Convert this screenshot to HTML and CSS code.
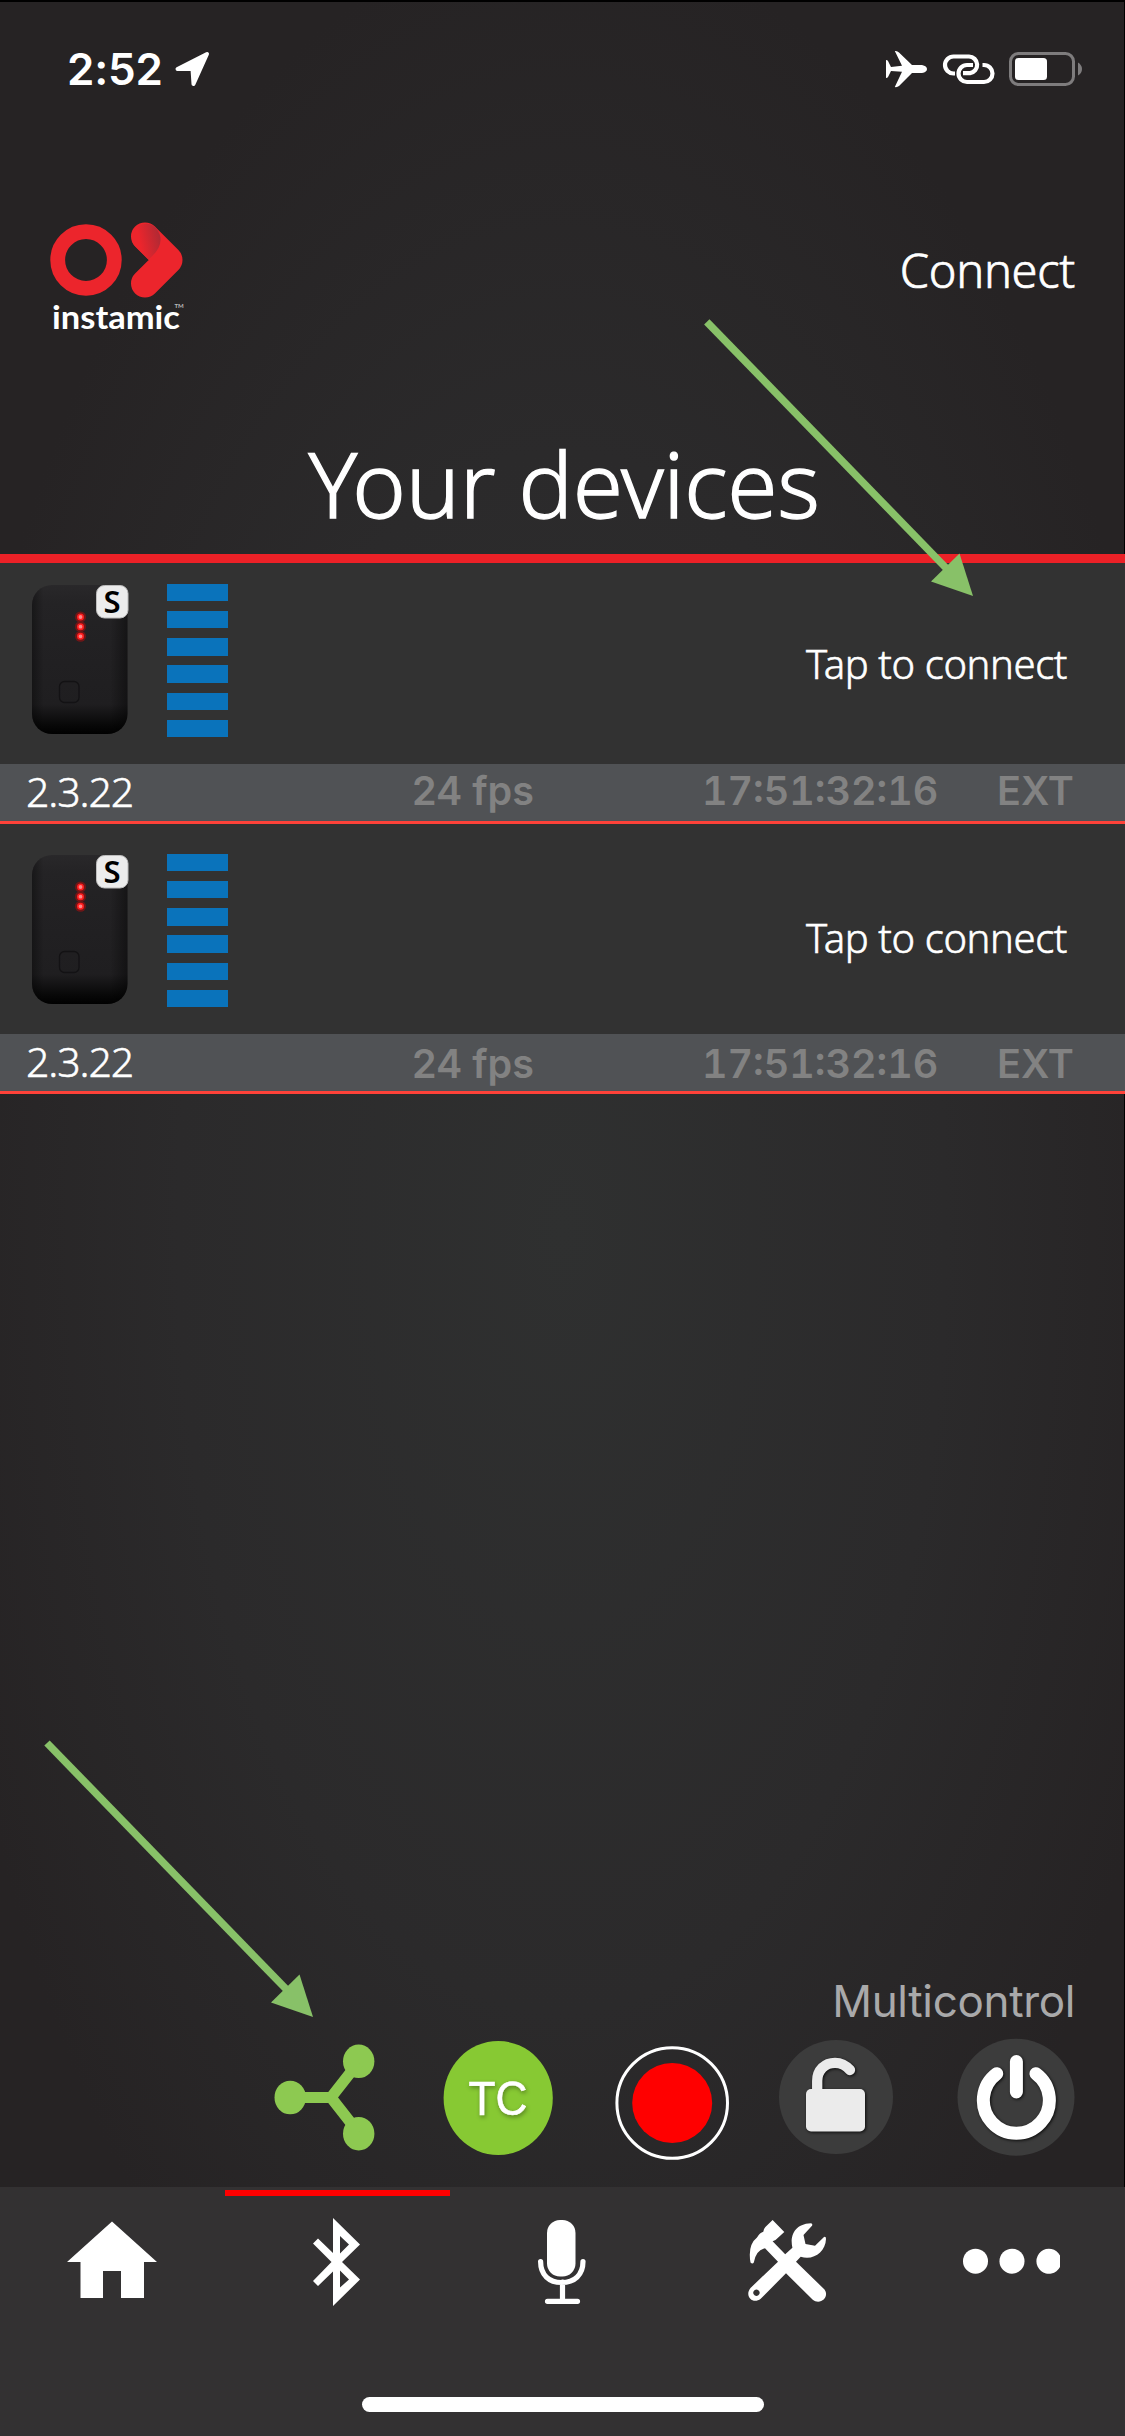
FILE: index.html
```html
<!DOCTYPE html>
<html lang="en">
<head>
<meta charset="utf-8">
<title>Your devices</title>
<link rel="stylesheet" href="styles.css">
</head>
<body>
<svg class="defs" width="0" height="0" aria-hidden="true">
  <defs>
    <linearGradient id="shell" x1="0" y1="0" x2="0" y2="1">
      <stop offset="0" stop-color="#29282a"/><stop offset=".12" stop-color="#242325"/>
      <stop offset=".8" stop-color="#1f1e20"/><stop offset=".94" stop-color="#080808"/><stop offset="1" stop-color="#000"/>
    </linearGradient>
    <linearGradient id="side" x1="0" y1="0" x2="1" y2="0">
      <stop offset="0" stop-color="#000" stop-opacity=".35"/><stop offset=".12" stop-color="#000" stop-opacity="0"/>
      <stop offset=".82" stop-color="#000" stop-opacity="0"/><stop offset="1" stop-color="#000" stop-opacity=".4"/>
    </linearGradient>
    <symbol id="device" viewBox="0 0 98 150">
      <rect x="0" y="0" width="95.5" height="149" rx="20" fill="url(#shell)"/>
      <rect x="0" y="0" width="95.5" height="149" rx="20" fill="url(#side)"/>
      <g fill="#f00" opacity=".35"><circle cx="48.5" cy="32" r="5.5"/><circle cx="48.5" cy="41.7" r="5.5"/><circle cx="48.5" cy="51.3" r="5.5"/></g>
      <g fill="#ff8585" stroke="#ff1d1d" stroke-width="1.6"><circle cx="48.5" cy="32" r="2.7"/><circle cx="48.5" cy="41.7" r="2.7"/><circle cx="48.5" cy="51.3" r="2.7"/></g>
      <rect x="27.500" y="96.500" width="19.500" height="21" rx="5" fill="none" stroke="#131214" stroke-width="1.3"/>
      <rect x="64.500" y="0.500" width="31.500" height="32.500" rx="8" fill="#ececec" stroke="#bdbdbd"/>
      <text class="badge-letter" x="80" y="28" text-anchor="middle">S</text>
    </symbol>
  </defs>
</svg>
<div class="screen">
  <header class="status">
    <span class="time">2:52</span>
    <svg class="location" width="36" height="36" viewBox="174 52 36 36"><path d="M207 55L193.500 85L192.500 70H177.500Z" fill="#fff" stroke="#fff" stroke-width="4" stroke-linejoin="round"/></svg>
    <svg class="plane" width="42" height="38" viewBox="885 50 42 38"><path fill="#fff" d="M894.800 51Q897.200 50.500 899 52.500L912 65H922Q927 66 927 69T922 73H912L899 86Q897.200 87.500 894.800 87L902 71.800L891 71L888 77Q887.500 78 886 78V60Q887.500 60 888 61L891 67L902 65.800Z"/></svg>
    <svg class="link" width="53" height="32" viewBox="942 53 53 32"><g fill="none" stroke="#fff" stroke-width="4.200"><path d="M955 73.500H953.500A8.500 8.500 0 0 1 953.500 56.500H969A8.400 8.400 0 0 1 970 73.200H963"/><path d="M973 65H967A8.500 8.500 0 0 0 967 82H984A8.500 8.500 0 0 0 984 65H982.500"/></g></svg>
    <svg class="battery" width="75" height="36" viewBox="1008 51 75 36"><rect x="1010.500" y="53.500" width="63" height="31" rx="8" fill="none" stroke="#7e7c7d" stroke-width="3"/><rect x="1015" y="58" width="32" height="22" rx="3.500" fill="#fff"/><path d="M1078 62.500Q1082 65 1082 69T1078 75.500Z" fill="#7e7c7d"/></svg>
  </header>

  <div class="brand">
    <svg class="logo" width="136" height="120" viewBox="49 222 136 120">
      <defs><linearGradient id="fold" gradientUnits="userSpaceOnUse" x1="140" y1="243" x2="163" y2="238"><stop offset="0" stop-color="#ec252c"/><stop offset="1" stop-color="#a92a35"/></linearGradient></defs>
      <circle cx="86" cy="260" r="28.300" fill="none" stroke="#ec252c" stroke-width="14.800"/>
      <path d="M145 236.500L168.500 260L145 283.500" fill="none" stroke="#ec252c" stroke-width="28" stroke-linecap="round" stroke-linejoin="round"/>
      <path d="M148.500 259.500L134 245A14 14 0 0 1 156 228Q168 243 148.500 259.500Z" fill="url(#fold)"/>
      <text class="wordmark" x="52" y="328.500" textLength="128" lengthAdjust="spacingAndGlyphs">instamic</text>
      <text class="tm" x="174.500" y="308">TM</text>
    </svg>
    <span class="connect">Connect</span>
  </div>

  <h1 class="title"><span>Your devices</span></h1>

  <ul class="devices">
    <li class="device">
      <div class="device-body">
        <svg class="unit" width="98" height="150"><use href="#device"/></svg>
        <div class="signal"><i></i><i></i><i></i><i></i><i></i><i></i></div>
        <span class="tap">Tap to connect</span>
      </div>
      <div class="info"><span class="version">2.3.22</span><span class="fps">24 fps</span><span class="tc">17:51:32:16</span><span class="ext">EXT</span></div>
    </li>
    <li class="device second">
      <div class="device-body">
        <svg class="unit" width="98" height="150"><use href="#device"/></svg>
        <div class="signal"><i></i><i></i><i></i><i></i><i></i><i></i></div>
        <span class="tap">Tap to connect</span>
      </div>
      <div class="info"><span class="version">2.3.22</span><span class="fps">24 fps</span><span class="tc">17:51:32:16</span><span class="ext">EXT</span></div>
    </li>
  </ul>

  <section class="multi">
    <div class="multi-label"><span>Multicontrol</span></div>
    <div class="controls">
      <svg class="share" width="102" height="118" viewBox="274 2038 102 118"><g fill="#8dc951"><ellipse cx="290.200" cy="2097.500" rx="15.700" ry="16.800"/><ellipse cx="358.700" cy="2061.300" rx="15.700" ry="16.800"/><ellipse cx="358.700" cy="2133.700" rx="15.700" ry="16.800"/></g><path d="M290 2097.500H331L358 2063M331 2097.500L358 2132" fill="none" stroke="#8dc951" stroke-width="11"/></svg>
      <svg class="tc-btn" width="110" height="118" viewBox="443 2038 110 118"><ellipse cx="498.200" cy="2098" rx="54.600" ry="57" fill="#87c933"/><text class="tc-text" x="498" y="2115.300" text-anchor="middle" textLength="59" lengthAdjust="spacingAndGlyphs">TC</text></svg>
      <svg class="rec" width="115" height="124" viewBox="615 2038 115 124"><circle cx="672.200" cy="2103" r="55.300" fill="none" stroke="#fff" stroke-width="3"/><circle cx="672.200" cy="2103" r="40" fill="#f00"/></svg>
      <svg class="lock" width="115" height="118" viewBox="779 2038 115 118"><circle cx="836" cy="2097" r="57" fill="#3c3c3c"/><g class="raised"><rect x="806" y="2089" width="59" height="42.500" rx="5" fill="#ebebeb"/><path d="M817.200 2092V2081C817.200 2070 825 2062.800 835 2062.800C842 2062.800 846 2065.500 850 2070" fill="none" stroke="#ebebeb" stroke-width="10.300" stroke-linecap="round"/></g></svg>
      <svg class="power" width="118" height="118" viewBox="957 2038 118 118"><circle cx="1016" cy="2097.300" r="58.500" fill="#3c3c3c"/><path class="raised" d="M996.700 2073.700A33 33 0 1 0 1036 2073.700M1016.400 2061.500V2092" fill="none" stroke="#fff" stroke-width="13" stroke-linecap="round"/></svg>
    </div>
  </section>

  <nav class="tabs">
    <svg class="tab" viewBox="0 2187 225 140"><path fill="#fff" d="M112 2221.500L157 2262H144V2298H121V2271H103V2298H80.500V2262H67Z"/></svg>
    <div class="tab active"><svg viewBox="225 2187 225 140"><path fill="#fff" fill-rule="evenodd" d="M333 2218L360 2244.500L342 2262L360 2279.500L333 2306V2271.500L318 2286L313 2281L331.500 2262L313 2243.500L318 2238.500L333 2253ZM340 2236V2253.500L349 2244.500ZM340 2270.500V2287.500L349 2279.500Z"/></svg></div>
    <svg class="tab" viewBox="450 2187 225 140"><rect x="547" y="2220" width="28.500" height="56.500" rx="13" fill="#fff"/><path d="M540.600 2261.500C540.600 2275 549 2282.500 561.700 2282.500S583 2275 583 2261.500M562.500 2282V2300M547.500 2301.300H577.500" fill="none" stroke="#fff" stroke-width="5.200" stroke-linecap="round"/></svg>
    <svg class="tab" viewBox="675 2187 225 140"><path fill="#fff" fill-rule="evenodd" d="M772.600 2220L784.300 2232L775.500 2240L772.600 2241.300L785.200 2254.300L792.400 2247.700C790 2238 793 2224 811 2223.300Q813 2224 812 2225.700L803.500 2235L805.500 2244L815 2245.700L824 2237Q826 2236 826 2239C825.500 2252 813 2261 800.700 2256.700L796 2261.700L824.500 2289.500C830 2297 820 2306 812.500 2299.500L786 2273.300L760.700 2298.800C753 2305 744 2296 750.500 2288L778 2261.700L765 2248.300Q756 2250 753.800 2262.500Q752.500 2264.500 750.500 2262.500Q747.500 2245 757 2237.500Q760 2232.500 763.300 2231.700Q763.500 2229 765.400 2227ZM756.400 2289.500A3.200 3.200 0 1 0 756.500 2289.500Z"/></svg>
    <svg class="tab" viewBox="900 2187 225 140"><g fill="#fff"><ellipse cx="975.500" cy="2261.200" rx="12.500" ry="12.500"/><circle cx="1012" cy="2261.200" r="12.500"/><path d="M1060 2255.500V2267A12.500 12.500 0 1 1 1060 2255.500Z"/></g></svg>
    <div class="home-indicator"></div>
  </nav>

  <svg class="pointers" width="1125" height="2436" viewBox="0 0 1125 2436"><g stroke="#88c168" stroke-width="7.500"><path d="M706.800 321.800L948 570"/><path d="M47 1743L288 1991"/></g><g fill="#88c168"><path d="M973 596L931 581.500L959.500 553.500Z"/><path d="M313 2017L271 2002.500L299.500 1974.500Z"/></g></svg>
</div>
</body>
</html>
```
FILE: styles.css
```css
* { box-sizing: border-box; }
html, body { margin: 0; padding: 0; }
body { width: 1125px; height: 2436px; background: #000; overflow: hidden; }
.defs { position: absolute; }

.screen {
  position: relative;
  display: flex;
  flex-direction: column;
  width: 1125px;
  height: 2436px;
  color: #fff;
  font-family: "Noto Sans", sans-serif;
  background: radial-gradient(ellipse 640px 1300px at 562px 1230px, #2f3030 0%, #2b2a2b 60%, #262324 100%) 0 2px / 1124px 100% no-repeat, #000;
}
.screen svg { display: block; flex: none; }

.status { display: flex; align-items: center; height: 138px; padding: 0 42px 0 67px; }
.time { font: 600 44px/60px Inter, sans-serif; letter-spacing: -0.2px; width: 107px; white-space: nowrap; }
.plane { margin-left: auto; }
.link { margin-left: 15px; }
.battery { margin-left: 13px; }

.brand { display: flex; justify-content: space-between; align-items: flex-start; height: 272px; padding: 84px 50px 0 49px; }
.wordmark { font: 700 33px Lato, sans-serif; fill: #fff; }
.tm { font: 700 6px Lato, sans-serif; fill: #bbb; }
.connect { font-size: 47px; line-height: 96px; font-weight: 300; letter-spacing: -0.3px; -webkit-text-stroke: 0.7px #fff; }

.title {
  display: flex;
  justify-content: center;
  height: 153px;
  margin: 0;
  padding-left: 3px;
  border-bottom: 9px solid #ec2127;
  font-size: 91px;
  line-height: 147px;
  font-weight: 300;
  letter-spacing: -0.3px;
  -webkit-text-stroke: 1.3px #fff;
}

.devices { margin: 0; padding: 0; list-style: none; }
.device-body { display: flex; align-items: flex-start; height: 201px; padding: 21px 58px 0 32px; background: #323232; }
.second .device-body { height: 210px; padding-top: 30px; }
.unit { margin-top: 1px; }
.signal { display: flex; flex-direction: column; justify-content: space-between; width: 61.500px; height: 153px; margin-left: 36.500px; }
.signal i { height: 17.300px; background: #0a73bb; }
.tap { margin-left: auto; padding-top: 30px; font-size: 40px; line-height: 100px; font-weight: 300; letter-spacing: -0.4px; -webkit-text-stroke: 0.6px #fff; }
.second .tap { padding-top: 34px; }
.badge-letter { font: 600 31px "Noto Sans", sans-serif; fill: #000; }

.info {
  display: grid;
  grid-template-columns: 412px 290px 295px 1fr;
  height: 60px;
  background: #505255;
  border-bottom: 3px solid #ff4239;
  font: 600 39.500px/55px Inter, sans-serif;
  color: #828282;
}
.second .info { line-height: 61px; }
.info .version { padding-left: 26px; font: 300 41px/54px "Noto Sans", sans-serif; letter-spacing: -1.1px; color: #fff; -webkit-text-stroke: 0.5px #fff; }
.info .tc { font-variant-numeric: tabular-nums; }

.multi { margin-top: auto; padding: 0 50px 31px 0; }
.multi-label { display: flex; justify-content: flex-end; height: 67px; font: 400 44px/60px Inter, sans-serif; letter-spacing: -0.35px; color: #a9a9aa; }
.controls { display: flex; justify-content: flex-end; align-items: flex-start; height: 118px; }
.tc-btn { margin-left: 67px; overflow: visible; }
.tc-text { font: 400 49px "Liberation Sans", Arial, sans-serif; fill: #fff; stroke: #fff; stroke-width: 0.600px; filter: drop-shadow(1px 2px 2px rgba(0,0,0,.35)); }
.rec { margin-left: 62px; }
.lock { margin-left: 49px; }
.power { margin-left: 63px; }
.raised { filter: drop-shadow(1px 1.500px 1.500px rgba(0,0,0,.8)); }

.tabs { display: grid; grid-template-columns: repeat(5, 225px); grid-template-rows: 140px 1fr; height: 249px; background: #333132; }
.tab, .tab svg { width: 225px; height: 140px; }
.active { position: relative; }
.active::before { content: ""; position: absolute; left: 0; top: 3px; width: 225px; height: 6px; background: #f00; }
.home-indicator { grid-column: 1 / -1; justify-self: center; width: 402px; height: 15px; margin-top: 70px; border-radius: 8px; background: #fff; }

.pointers { position: absolute; left: 0; top: 0; pointer-events: none; }
```
